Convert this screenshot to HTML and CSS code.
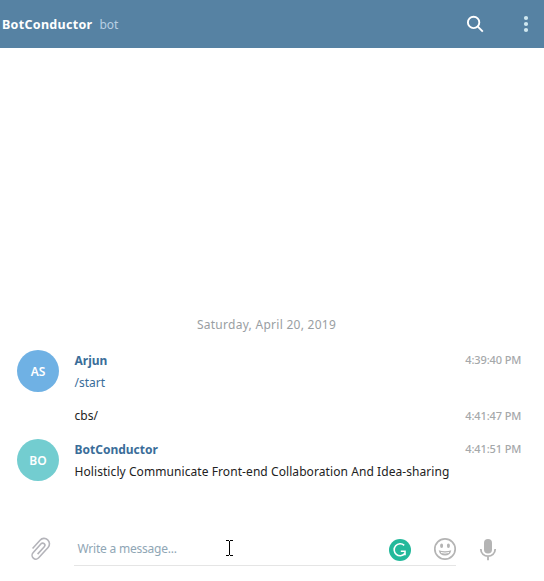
FILE: index.html
```html
<!DOCTYPE html>
<html lang="en">
<head>
<meta charset="utf-8">
<title>BotConductor</title>
<link rel="stylesheet" href="styles.css">
</head>
<body>
<header class="topbar">
  <span class="peer-name">BotConductor</span>
  <span class="peer-status">bot</span>
  <svg class="search" width="18" height="18" viewBox="0 0 18 18"><circle cx="7.6" cy="7.4" r="5.7"/><path d="M11.6 11.4L16.8 16.6"/></svg>
  <svg class="menu" width="6" height="18" viewBox="0 0 6 18"><circle cx="3" cy="3" r="2.1"/><circle cx="3" cy="9" r="2.1"/><circle cx="3" cy="15" r="2.1"/></svg>
</header>
<main class="history">
  <div class="date"><span>Saturday, April 20, 2019</span></div>
  <article class="message">
    <div class="avatar blue">AS</div>
    <div class="content">
      <div class="author">Arjun</div>
      <div class="text command">/start</div>
    </div>
    <time>4:39:40 PM</time>
  </article>
  <article class="message follow">
    <div class="content"><div class="text">cbs/</div></div>
    <time>4:41:47 PM</time>
  </article>
  <article class="message">
    <div class="avatar teal">BO</div>
    <div class="content">
      <div class="author">BotConductor</div>
      <div class="text long">Holisticly Communicate Front-end Collaboration And Idea-sharing</div>
    </div>
    <time>4:41:51 PM</time>
  </article>
</main>
<footer class="composer">
  <svg class="clip" width="22" height="24" viewBox="0 0 22 24"><g transform="translate(10.2 11.4) rotate(42)"><path d="M-5.6 5.2V-6A5.4 5.4 0 0 1 5.2-6V8A3.8 3.8 0 0 1-2.4 8V-4A2.1 2.1 0 0 1 1.9-4V6"/></g></svg>
  <div class="field">
    <span class="placeholder">Write a message...</span>
    <svg class="grammar" width="22" height="22" viewBox="0 0 22 22"><circle cx="11" cy="11" r="11" fill="#23b99b"/><path d="M15.2 6.3A6 6 0 1 0 15.8 14.6M11.8 12.3H16V16.2" fill="none" stroke="#fff" stroke-width="1.6"/></svg>
  </div>
  <svg class="smile" width="24" height="24" viewBox="0 0 24 24"><circle cx="12" cy="12" r="10.2" fill="none" stroke="#b4b4b4" stroke-width="1.7"/><ellipse cx="8.6" cy="8.7" rx="1.5" ry="2.3"/><ellipse cx="15.4" cy="8.7" rx="1.5" ry="2.3"/><path d="M5.7 13.2Q12 15.2 18.3 13.2Q17.2 18.5 12 18.5T5.7 13.2Z"/><path d="M8 15.5Q12 16.7 16 15.5" fill="none" stroke="#fff" stroke-width="1"/></svg>
  <svg class="mic" width="18" height="22" viewBox="0 0 18 22"><rect x="5" y="0" width="8" height="14.5" rx="4"/><path d="M1.8 10C1.8 19.6 16.2 19.6 16.2 10M9 17V21.3" fill="none" stroke="#b4b4b4" stroke-width="1.8"/></svg>
  <svg class="cursor" width="7" height="16" viewBox="0 0 7 16"><path d="M0 0H3V1H0ZM4 0H7V1H4ZM3 1H4V15H3ZM0 15H3V16H0ZM4 15H7V16H4Z"/></svg>
</footer>
</body>
</html>
```
FILE: styles.css
```css
* { box-sizing: border-box; }
body {
  margin: 0;
  height: 581px;
  display: flex;
  flex-direction: column;
  overflow: hidden;
  background: #fff;
  color: #222;
  font: 12px/18px "Noto Sans", sans-serif;
}
svg { display: block; flex: none; }
.topbar {
  height: 48px;
  display: flex;
  align-items: center;
  padding: 0 15px 0 2px;
  background: #5682a3;
  color: #fff;
}
.peer-name, .peer-status { padding-top: 2px; }
.peer-name { font-weight: 700; font-size: 12.5px; letter-spacing: .3px; white-space: nowrap; }
.peer-status { margin-left: 7px; color: #b9cfe3; }
.search { margin-left: auto; fill: none; stroke: #fff; stroke-width: 1.9; }
.menu { margin-left: 39px; fill: #d0e8f0; }
.history {
  flex: 1;
  display: flex;
  flex-direction: column;
  justify-content: flex-end;
  padding: 0 22px 30px 17px;
}
.date { display: flex; justify-content: center; margin: 0 0 16px -6px; color: #999ea2; letter-spacing: .27px; }
.message { display: flex; align-items: flex-start; height: 53px; white-space: nowrap; }
.avatar {
  width: 42px;
  height: 42px;
  margin-right: 15px;
  border-radius: 50%;
  color: #fff;
  font-weight: 600;
  line-height: 43px;
  text-align: center;
}
.blue { background: #6fb1e4; }
.teal { background: #73cdd0; }
.content { flex: 1; padding: 2px 0 0 .5px; }
.author { color: #3a6d99; font-weight: 700; }
.text { margin-top: 4px; }
.long { letter-spacing: .075px; }
.command { color: #3a6d99; }
.message.follow { height: 36px; padding-left: 57px; }
.follow .text { margin-top: 2px; }
.follow time { padding-top: 4px; }
time { padding: 1px .7px 0 0; color: #a5a8aa; font-size: 11px; font-weight: 500; letter-spacing: -.1px; }
.composer {
  position: relative;
  height: 59px;
  display: flex;
  align-items: flex-start;
  padding-left: 30px;
}
.clip { margin-top: 15px; fill: none; stroke: #b4b4ba; stroke-width: 1.6; }
.field {
  width: 382px;
  height: 44px;
  margin-left: 22px;
  padding: 17px 45px 0 3.5px;
  display: flex;
  justify-content: space-between;
  align-items: flex-start;
  border-bottom: 1px solid #e5e5e5;
}
.placeholder { padding-top: 1px; color: #8fa6b5; line-height: 18px; letter-spacing: -.22px; }
.smile { margin: 15px 0 0 -23px; fill: #b4b4b4; }
.mic { margin: 17px 0 0 22px; fill: #b4b4b4; }
.cursor { position: absolute; left: 226px; top: 18px; fill: #000; }
```
